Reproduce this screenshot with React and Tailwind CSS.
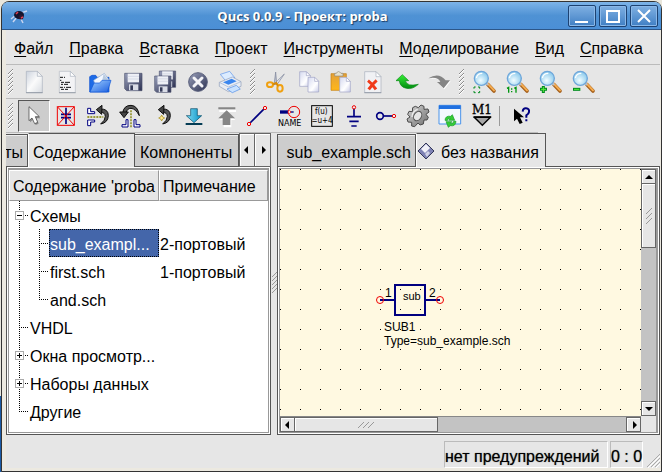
import React from "react";

const NAVY = "#000080";
const RED = "#f00000";

/* Every toolbar glyph is drawn on a 78-unit grid, three units to a pixel. */
function Glyph({ children }) {
  return (
    <svg className="h-[26px] w-[26px] shrink-0 overflow-visible" viewBox="0 0 78 78" aria-hidden="true">
      {children}
    </svg>
  );
}

function Defs() {
  return (
    <svg className="absolute h-0 w-0" aria-hidden="true">
      <defs>
        <linearGradient id="paper" x1="0" y1="0" x2="1" y2="1">
          <stop offset="0" stopColor="#ccd3de" />
          <stop offset=".5" stopColor="#fbfbfb" />
          <stop offset="1" stopColor="#d8dce2" />
        </linearGradient>
        <linearGradient id="sheet" x1="0" y1="0" x2="1" y2="1">
          <stop offset="0" stopColor="#d5d9f0" />
          <stop offset=".6" stopColor="#ffffff" />
          <stop offset="1" stopColor="#c9cce8" />
        </linearGradient>
        <linearGradient id="steel" x1="0" y1="0" x2="1" y2="1">
          <stop offset="0" stopColor="#9aa0bb" />
          <stop offset="1" stopColor="#2b3050" />
        </linearGradient>
        <linearGradient id="blue" x1="0" y1="0" x2="1" y2="1">
          <stop offset="0" stopColor="#9fd0ff" />
          <stop offset="1" stopColor="#1d5fe0" />
        </linearGradient>
        <linearGradient id="gold" x1="0" y1="0" x2="0" y2="1">
          <stop offset="0" stopColor="#e2a13b" />
          <stop offset="1" stopColor="#ffb719" />
        </linearGradient>
        <linearGradient id="cyan" x1="0" y1="0" x2="1" y2="0">
          <stop offset="0" stopColor="#7fdcf4" />
          <stop offset="1" stopColor="#0891c4" />
        </linearGradient>
        <linearGradient id="green" x1="0" y1="0" x2="0" y2="1">
          <stop offset="0" stopColor="#35f035" />
          <stop offset="1" stopColor="#008a10" />
        </linearGradient>
        <linearGradient id="silver" x1="0" y1="0" x2="1" y2="1">
          <stop offset="0" stopColor="#d8d8d8" />
          <stop offset="1" stopColor="#6c6c6c" />
        </linearGradient>
        <radialGradient id="lens" cx=".45" cy=".65" r=".7">
          <stop offset="0" stopColor="#f1fcff" />
          <stop offset="1" stopColor="#7fc4ea" />
        </radialGradient>
      </defs>
    </svg>
  );
}

const NewFile = () => (
  <Glyph>
    <path d="M16 7H49L64 22V71H16Z" fill="url(#paper)" stroke="#a9b1bd" strokeWidth="2" />
    <path d="M49 7V22H64Z" fill="#f4f5f7" stroke="#a9b1bd" strokeWidth="2" />
    <path d="M15 71H65" stroke="#7f8794" strokeWidth="2" />
  </Glyph>
);
const NewText = () => (
  <Glyph>
    <path d="M16 7H49L64 22V71H16Z" fill="#f3f3f5" stroke="#b4b9c2" strokeWidth="2" />
    <path d="M49 7V22H64Z" fill="#fff" stroke="#a9b1bd" strokeWidth="2" />
    <path d="M15 71H65" stroke="#7f8794" strokeWidth="2" />
    <path d="M18 25h9M30 25h3M18 34h4M21 40h9M33 40h15M21 46h6M30 46h12M18 55h9M30 55h3M36 55h15M21 61h9M33 61h9" stroke="#111" strokeWidth="3" />
  </Glyph>
);
const OpenFile = () => (
  <Glyph>
    <path d="M8 69V23L15 19H26L30 25H66V69Z" fill="#1d6be6" stroke="#0b4ed0" strokeWidth="2" />
    <path d="M20 34L52 13L66 33L60 58L28 60Z" fill="#f2f7ff" stroke="#8fa9cc" strokeWidth="2" />
    <path d="M50 14L64 34L46 33Z" fill="#b9cbe0" />
    <path d="M9 69L21 42H38L45 34H72L61 69Z" fill="url(#blue)" stroke="#0d56d8" strokeWidth="2" />
  </Glyph>
);
function Disk({ x, y, s = 1 }) {
  return (
    <g transform={`translate(${x} ${y}) scale(${s})`}>
      <path d="M0 0H52V52H6L0 46Z" fill="url(#steel)" stroke="#4a506d" strokeWidth="2" />
      <path d="M9 1H43V27H9Z" fill="#eef0f6" />
      <path d="M9 9H43M9 17H43" stroke="#c9cede" strokeWidth="2" />
      <path d="M13 33H41V51H13Z" fill="#d9dce6" />
      <path d="M17 36H25V50H17Z" fill="#343a58" />
    </g>
  );
}
const Save = () => (
  <Glyph>
    <Disk x={14} y={13} />
  </Glyph>
);
const SaveAll = () => (
  <Glyph>
    <Disk x={19} y={6} s={0.94} />
    <Disk x={5} y={21} s={0.94} />
  </Glyph>
);
const Close = () => (
  <Glyph>
    <circle cx="36" cy="39" r="28" fill="url(#steel)" stroke="#5a607c" strokeWidth="3" />
    <path d="M24 27L48 51M48 27L24 51" stroke="#f4f4f8" strokeWidth="9" strokeLinecap="round" />
  </Glyph>
);
const Print = () => (
  <Glyph>
    <path d="M4 16L32 7L48 27L22 38Z" fill="#dcecff" stroke="#5a93e8" strokeWidth="2" />
    <path d="M1 40L40 24L66 38V52L28 68L1 52Z" fill="#e9edf4" stroke="#8c9cb8" strokeWidth="2" />
    <path d="M1 40L28 54L66 38" fill="none" stroke="#9fb0cc" strokeWidth="2" />
    <path d="M12 40L38 29L53 37L28 47Z" fill="#3a86ee" />
    <path d="M24 60L52 49L64 60L40 71Z" fill="#c9e2ff" stroke="#4b8ae6" strokeWidth="2" />
  </Glyph>
);
const Cut = () => (
  <Glyph>
    <path d="M38 9L41 42L33 48Z" fill="#b9bfce" stroke="#7c8499" strokeWidth="2" />
    <path d="M64 15L42 47L34 44Z" fill="#dfe2ea" stroke="#7c8499" strokeWidth="2" />
    <ellipse cx="21" cy="47" rx="9" ry="7" fill="none" stroke="#f0a010" strokeWidth="6" />
    <ellipse cx="51" cy="58" rx="8" ry="10" fill="none" stroke="#f0a010" strokeWidth="6" />
    <path d="M29 46L40 42L45 51" fill="none" stroke="#d88a08" strokeWidth="6" />
  </Glyph>
);
const Page = ({ x, y }) => (
  <g transform={`translate(${x} ${y})`}>
    <path d="M0 0H20L32 12V44H0Z" fill="url(#sheet)" stroke="#9ea2c4" strokeWidth="2" />
    <path d="M20 0V12H32Z" fill="#fff" stroke="#9ea2c4" strokeWidth="2" />
  </g>
);
const Copy = () => (
  <Glyph>
    <Page x={11} y={8} />
    <Page x={36} y={25} />
  </Glyph>
);
const Paste = () => (
  <Glyph>
    <path d="M6 14H52V64H6Z" fill="url(#gold)" stroke="#c48012" strokeWidth="2" />
    <path d="M17 21V13H22Q28 2 36 13H42V21Z" fill="#e6e2d0" stroke="#8f8a78" strokeWidth="2" />
    <Page x={32} y={25} />
  </Glyph>
);
const Delete = () => (
  <Glyph>
    <path d="M8 8H42L57 23V71H8Z" fill="#f0f1f4" stroke="#a9b1bd" strokeWidth="2" />
    <path d="M42 8V23H57Z" fill="#fff" stroke="#a9b1bd" strokeWidth="2" />
    <path d="M7 71H58" stroke="#7f8794" strokeWidth="2" />
    <path d="M18 35Q30 44 42 61M44 34Q32 44 20 61" fill="none" stroke="#f03a1a" strokeWidth="9" />
  </Glyph>
);
const Undo = () => (
  <Glyph>
    <path d="M3 35L22 17L41 35H31Q36 54 70 46Q52 62 34 58Q15 54 13 35Z" fill="url(#green)" stroke="#078a14" strokeWidth="2" />
  </Glyph>
);
const Redo = () => (
  <Glyph>
    <path d="M6 30Q36 12 55 37H68L49 61L29 42H39Q31 25 6 30Z" fill="#fff" />
    <path d="M1 28Q32 8 53 34H66L47 58L27 39H37Q29 22 1 28Z" fill="#858585" />
  </Glyph>
);
const Magnifier = ({ children }) => (
  <Glyph>
    <path d="M47 46L66 66" stroke="#a5601c" strokeWidth="11" strokeLinecap="round" />
    <path d="M48 45L66 64" stroke="#f5ac50" strokeWidth="6" strokeLinecap="round" />
    <path d="M42 42L48 48" stroke="#b8c0cc" strokeWidth="7" />
    <circle cx="28" cy="28" r="21" fill="url(#lens)" stroke="#6ea6da" strokeWidth="4" />
    <path d="M13 27Q16 13 31 13" fill="none" stroke="#fff" strokeWidth="4" />
    {children}
  </Glyph>
);
const ZoomFit = () => (
  <Magnifier>
    <path d="M6 59V54H11M18 54H23V59M23 66V71H18M11 71H6V66" fill="none" stroke="#008c1e" strokeWidth="3" />
  </Magnifier>
);
const ZoomOne = () => (
  <Magnifier>
    <path d="M6 58L11 55V71M28 58L33 55V71M20 58V62M20 66V70" fill="none" stroke="#009610" strokeWidth="4" />
  </Magnifier>
);
const ZoomIn = () => (
  <Magnifier>
    <path d="M16 51V72M6 61H27" stroke="#008c1e" strokeWidth="9" />
    <path d="M16 54V69M9 61H24" stroke="#5bee3e" strokeWidth="3" />
  </Magnifier>
);
const ZoomOut = () => (
  <Magnifier>
    <path d="M6 61H28" stroke="#008c1e" strokeWidth="9" />
    <path d="M9 61H25" stroke="#5bee3e" strokeWidth="3" />
  </Magnifier>
);

const Pointer = () => (
  <Glyph>
    <path d="M27 16V58L36 50L44 66L53 62L46 46H58Z" fill="#8c8c8c" />
    <path d="M24 11V53L33 45L41 62L50 58L43 41H55Z" fill="#fff" stroke="#333" strokeWidth="2" />
  </Glyph>
);
const Deactivate = () => (
  <Glyph>
    <path d="M39 14V63M24 34H54M24 44H54" stroke={NAVY} strokeWidth="5" />
    <path d="M13 11H64V67H13ZM13 11L64 67M64 11L13 67" fill="none" stroke={RED} strokeWidth="3" />
  </Glyph>
);
const BackArrow = ({ x, y }) => (
  <g transform={`translate(${x} ${y})`}>
    <path d="M12 11Q36 10 36 31Q35 52 13 56Q27 45 27 33Q26 21 12 20Z" fill="#555" stroke="#0c0c0c" strokeWidth="3" />
    <path d="M0 13L17 0L16 27Z" fill="#444" stroke="#0c0c0c" strokeWidth="3" />
  </g>
);
const MirrorX = () => (
  <Glyph>
    <BackArrow x={34} y={7} />
    <path d="M8 16V32H29V26H17V16ZM8 68V51H29V57H17V68Z" fill="#fff" stroke={NAVY} strokeWidth="3" />
    <path d="M7 42H55" stroke="#808000" strokeWidth="4" strokeDasharray="6 3" />
  </Glyph>
);
const MirrorY = () => (
  <Glyph>
    <path d="M17 30Q20 7 42 7Q63 8 67 38Q56 17 42 16Q30 16 27 30Z" fill="#555" stroke="#0c0c0c" strokeWidth="3" />
    <path d="M8 27L34 27L21 44Z" fill="#444" stroke="#0c0c0c" strokeWidth="3" />
    <path d="M15 72H33V50H27V65H15ZM69 72H51V50H57V65H69Z" fill="#fff" stroke={NAVY} strokeWidth="3" />
    <path d="M42 22V76" stroke="#808000" strokeWidth="4" strokeDasharray="6 3" />
  </Glyph>
);
const Rotate = () => (
  <Glyph>
    <BackArrow x={28} y={7} />
    <path d="M38 36L41 42L47 45L41 48L38 54L35 48L29 45L35 42Z" fill="#ffe890" stroke="#a08a10" strokeWidth="2" />
  </Glyph>
);
const GoInto = () => (
  <Glyph>
    <path d="M29 17H49V38H62L39 59L16 38H29Z" fill="url(#cyan)" stroke="#064a66" strokeWidth="2" />
    <path d="M14 63H64" stroke="#053d55" strokeWidth="6" />
  </Glyph>
);
const PopOut = () => (
  <Glyph>
    <path d="M19 21H69V27H19ZM32 73V51H19L43 29L67 51H55V73Z" fill="#fff" />
    <path d="M16 13H67V19H16ZM29 66V46H16L41 22L66 46H52V66Z" fill="#868686" />
  </Glyph>
);
const Wire = () => (
  <Glyph>
    <path d="M15 60L58 17" stroke={NAVY} strokeWidth="5" />
    <circle cx="12" cy="63" r="5" fill="#eee" stroke={RED} strokeWidth="3" />
    <circle cx="60" cy="15" r="5" fill="#eee" stroke={RED} strokeWidth="3" />
  </Glyph>
);
const Label = () => (
  <Glyph>
    <path d="M9 27H50" stroke={NAVY} strokeWidth="4" />
    <path d="M9 22H33V32H9Z" fill={NAVY} />
    <circle cx="51" cy="27" r="17" fill="none" stroke={RED} strokeWidth="3" />
    <circle cx="37" cy="27" r="4" fill="#fff" stroke={RED} strokeWidth="2" />
    <text x="38" y="69" textAnchor="middle" className="font-['DejaVu_Sans',sans-serif]" fontSize="24" fill="#000">NAME</text>
  </Glyph>
);
const Equation = () => (
  <Glyph>
    <rect x="8" y="8" width="62" height="62" fill="none" stroke="#000" strokeWidth="3" />
    <text x="37" y="34" textAnchor="middle" className="font-['DejaVu_Sans_Condensed','DejaVu_Sans',sans-serif]" fontSize="24" fill="#000">f(u)</text>
    <text x="39" y="61" textAnchor="middle" className="font-['DejaVu_Sans_Condensed','DejaVu_Sans',sans-serif]" fontSize="24" fill="#000">=u+4</text>
  </Glyph>
);
const Ground = () => (
  <Glyph>
    <path d="M39 16V40M18 41H60M25 55H53M31 69H47" stroke={NAVY} strokeWidth="5" />
    <circle cx="39" cy="13" r="5" fill="#eee" stroke={RED} strokeWidth="3" />
  </Glyph>
);
const Port = () => (
  <Glyph>
    <circle cx="21" cy="39" r="10" fill="none" stroke={NAVY} strokeWidth="5" />
    <path d="M31 39H58" stroke={NAVY} strokeWidth="5" />
    <circle cx="63" cy="39" r="5" fill="#eee" stroke={RED} strokeWidth="3" />
  </Glyph>
);
const Gear = () => (
  <Glyph>
    <path
      d="M31 10L40 14L48 6L57 10L57 19L69 18L72 27L63 34L70 43L66 51L57 51L55 63L45 66L39 60L29 71L20 69L20 58L9 57L6 48L15 42L8 34L12 25L22 26L23 14Z"
      fill="url(#silver)"
      stroke="#4a4a4a"
      strokeWidth="3"
      strokeLinejoin="round"
    />
    <ellipse cx="38" cy="39" rx="11" ry="15" transform="rotate(32 38 39)" fill="#e6e6e6" stroke="#555" strokeWidth="3" />
    <path d="M21 42Q22 24 38 19" fill="none" stroke="#f0f0f0" strokeWidth="4" />
  </Glyph>
);
const ViewData = () => (
  <Glyph>
    <path d="M6 7H71V63H6Z" fill="#f4f9ff" stroke="#4a94ea" strokeWidth="3" />
    <path d="M6 7H71V18H6Z" fill="#2070e0" />
    <path d="M24 52Q25 37 41 40L46 35L53 52L35 52L40 47Q33 44 31 53Z" fill="#35cc35" stroke="#159c28" strokeWidth="2" />
    <path d="M57 55Q56 71 40 68L34 73L27 56L45 56L40 61Q48 64 50 55Z" fill="#35cc35" stroke="#159c28" strokeWidth="2" />
  </Glyph>
);
const Marker = () => (
  <Glyph>
    <text x="39" y="32" textAnchor="middle" className="font-['DejaVu_Serif',serif]" fontSize="36" fill="#000" stroke="#000">M1</text>
    <path d="M16 43H64L40 67Z" fill="#a6a6a6" stroke="#000" strokeWidth="4" />
    <path d="M14 42H66" stroke="#000" strokeWidth="5" />
  </Glyph>
);
const WhatsThis = () => (
  <Glyph>
    <path d="M15 17V55L24 47L32 63L41 59L33 43H45Z" fill="#000" />
    <path d="M41 26Q42 15 51 16Q62 17 60 27Q59 33 52 37V44M52 49V55" fill="none" stroke={NAVY} strokeWidth="6" />
  </Glyph>
);

function ToolButton({ icon: Icon, label, active }) {
  return (
    <button
      type="button"
      aria-label={label}
      className={
        active
          ? "flex h-8 w-8 items-center justify-center border border-b-white border-l-[#555] border-r-white border-t-[#555] bg-[#cdcdcd]"
          : "flex h-8 w-8 items-center justify-center"
      }
    >
      <Icon />
    </button>
  );
}

function Grip() {
  return (
    <span className="flex w-3 items-center pl-0.5">
      <svg className="h-[26px] w-[5px]" viewBox="0 0 5 26" aria-hidden="true">
        {[0, 4, 8, 12, 16, 20].map((y) => (
          <g key={y}>
            <path d={`M0 ${y + 6}L5 ${y + 1}`} stroke="#fff" />
            <path d={`M0 ${y + 5}L5 ${y}`} stroke="#8c8c8c" />
          </g>
        ))}
      </svg>
    </span>
  );
}

const fileTools = [
  [
    [NewFile, "Новый"],
    [NewText, "Новый текст"],
    [OpenFile, "Открыть"],
    [Save, "Сохранить"],
    [SaveAll, "Сохранить все"],
    [Close, "Закрыть"],
    [Print, "Печать"],
  ],
  [
    [Cut, "Вырезать"],
    [Copy, "Копировать"],
    [Paste, "Вставить"],
    [Delete, "Удалить"],
    [Undo, "Отменить"],
    [Redo, "Вернуть"],
  ],
  [
    [ZoomFit, "Показать все"],
    [ZoomOne, "Масштаб 1:1"],
    [ZoomIn, "Увеличить"],
    [ZoomOut, "Уменьшить"],
  ],
];

const workTools = [
  [Pointer, "Выделить"],
  [Deactivate, "Деактивировать"],
  [MirrorX, "Отразить по X"],
  [MirrorY, "Отразить по Y"],
  [Rotate, "Повернуть"],
  [GoInto, "Войти в подсхему"],
  [PopOut, "Выйти из подсхемы"],
  [Wire, "Проводник"],
  [Label, "Метка проводника"],
  [Equation, "Уравнение"],
  [Ground, "Земля"],
  [Port, "Вывод"],
  [Gear, "Моделировать"],
  [ViewData, "Просмотр данных"],
  [Marker, "Маркер"],
];

const menus = ["Файл", "Правка", "Вставка", "Проект", "Инструменты", "Моделирование", "Вид", "Справка"];

function TitleButton({ label, d }) {
  return (
    <button
      type="button"
      aria-label={label}
      className="flex h-[22px] w-7 items-center justify-center rounded-[2px] border border-[#1d4272] bg-linear-to-b from-[#7fb0e2] to-[#3f7fc4] shadow-[inset_0_0_0_1px_#8ab8e8]"
    >
      <svg className="h-4 w-4" viewBox="0 0 16 16" aria-hidden="true">
        <path d={d} fill="none" stroke="#fff" strokeWidth="2" />
      </svg>
    </button>
  );
}

function TitleBar() {
  return (
    <header className="flex h-7 shrink-0 items-center gap-[3px] rounded-t-md border-b border-[#2c5688] bg-linear-to-b from-[#7db4e8] via-[#4f92d4] to-[#4b8fd6] px-[3px]">
      <svg className="ml-1 h-5 w-5 shrink-0" viewBox="0 0 20 20" aria-hidden="true">
        <path d="M2 13L7 9M4 16L8 11M12 7L18 5M12 13L14 17" stroke="#c8d4f0" strokeWidth="1.5" />
        <ellipse cx="10" cy="9" rx="5" ry="4" fill="#14142e" />
        <circle cx="12" cy="11" r="2.5" fill="#2a1730" />
        <path d="M7 8l2-2M12 12l2-1" stroke="#e04050" strokeWidth="1.5" />
      </svg>
      <h1 className="flex-1 pl-2 text-center font-['Open_Sans','Noto_Sans',sans-serif] text-[13px] font-bold text-white [text-shadow:1px_1px_1px_#1b3a60]">
        Qucs 0.0.9 - Проект: proba
      </h1>
      <TitleButton label="Свернуть" d="M1 14H14" />
      <TitleButton label="Развернуть" d="M2 3H14V14H2Z" />
      <TitleButton label="Закрыть окно" d="M2 2L14 14M14 2L2 14" />
    </header>
  );
}

/* Dotted guides of the tree: "tee" passes on downwards, "end" stops, "line" has no arm. */
function Branch({ kind, box }) {
  const dots = { stroke: "#000", strokeDasharray: "1 1" };
  return (
    <svg className="h-7 w-5 shrink-0" viewBox="0 0 20 28" aria-hidden="true">
      <path d={kind === "end" ? "M10.5 0V15" : "M10.5 0V28"} {...dots} />
      {kind !== "line" && <path d="M12 14.5H19" {...dots} />}
      {box && (
        <g>
          <rect x="6.5" y="10.5" width="8" height="8" fill="#fff" stroke="#aaa" />
          <path d={box === "plus" ? "M8 14.5H13M10.5 12V17" : "M8 14.5H13"} stroke="#000" />
        </g>
      )}
    </svg>
  );
}

const tree = [
  { name: "Схемы", guides: ["tee"], box: "minus" },
  { name: "sub_exampl...", note: "2-портовый", guides: ["line", "tee"], selected: true },
  { name: "first.sch", note: "1-портовый", guides: ["line", "tee"] },
  { name: "and.sch", guides: ["line", "end"] },
  { name: "VHDL", guides: ["tee"] },
  { name: "Окна просмотр...", guides: ["tee"], box: "plus" },
  { name: "Наборы данных", guides: ["tee"], box: "plus" },
  { name: "Другие", guides: ["end"] },
];

function TreeTable() {
  const head = "h-[31px] border border-b-[#999] border-l-white border-r-[#999] border-t-white bg-[#e6e6e6] px-[3px] pt-0.5 text-left font-normal";
  return (
    <table className="w-full table-fixed border-separate border-spacing-0 whitespace-nowrap">
      <thead>
        <tr>
          <th className={`${head} w-[150px]`}>Содержание 'proba</th>
          <th className={head}>Примечание</th>
        </tr>
      </thead>
      <tbody>
        {tree.map((row) => (
          <tr key={row.name}>
            <td className="p-0">
              <div className="flex h-7">
                {row.guides.map((g, i) => (
                  <Branch key={i} kind={g} box={row.box} />
                ))}
                <span
                  className={
                    row.selected
                      ? "flex flex-1 items-center border border-dotted border-black bg-[#4466aa] pt-1 text-white"
                      : "flex flex-1 items-center pl-px pt-1"
                  }
                >
                  {row.name}
                </span>
              </div>
            </td>
            <td className="px-px pb-0 pt-1">{row.note}</td>
          </tr>
        ))}
      </tbody>
    </table>
  );
}

function Arrow({ d }) {
  return (
    <svg className="h-2 w-2 shrink-0" viewBox="0 0 8 8" aria-hidden="true">
      <path d={d} fill="#000" />
    </svg>
  );
}
const LEFT = "M5 0V8L1 4Z";
const RIGHT = "M3 0V8L7 4Z";
const UP = "M0 6H8L4 2Z";
const DOWN = "M0 2H8L4 6Z";

const raised = "flex items-center justify-center border border-[#666] bg-[#e6e6e6] shadow-[inset_1px_1px_0_#fff]";
const idleTab = "mt-px flex h-[33px] items-center overflow-hidden border border-[#555] bg-[#cdcdcd] pt-1 shadow-[inset_0_1px_0_#eee]";
const activeTab = "flex h-[34px] items-center overflow-hidden border-l border-r border-t border-l-white border-r-[#555] border-t-[#555] bg-[#e6e6e6] pt-1";

function Sidebar() {
  return (
    <aside className="flex w-[265px] shrink-0 flex-col">
      <div role="tablist" className="flex h-[34px] whitespace-nowrap">
        <button type="button" role="tab" className={`${idleTab} w-[22px] justify-end border-l-0 pr-1`}>
          ты
        </button>
        <button type="button" role="tab" aria-selected="true" className={`${activeTab} w-[107px] pl-1`}>
          Содержание
        </button>
        <button type="button" role="tab" className={`${idleTab} flex-1 border-l-0 pl-[5px]`}>
          Компоненты
        </button>
        <button type="button" aria-label="Вкладки влево" className={`${raised} w-4`}>
          <Arrow d={LEFT} />
        </button>
        <button type="button" aria-label="Вкладки вправо" className={`${raised} w-4 border-l-0`}>
          <Arrow d={RIGHT} />
        </button>
      </div>
      <div className="flex flex-1 flex-col border border-t-0 border-[#555] bg-white p-px">
        <div className="flex-1 border border-t-2 border-[#999]">
          <TreeTable />
        </div>
      </div>
    </aside>
  );
}

function Schematic() {
  return (
    <svg className="min-h-0 w-full flex-1 bg-[#fff9e1] font-['Liberation_Sans',Arial,sans-serif] text-[12px]" role="img" aria-label="Схема">
      <defs>
        <pattern id="grid" width="20" height="20" patternUnits="userSpaceOnUse">
          <rect width="1" height="1" fill="#000" />
        </pattern>
      </defs>
      <rect width="100%" height="100%" fill="url(#grid)" />
      <g fill="none" stroke={NAVY} strokeWidth="2">
        <rect x="115" y="116" width="30" height="30" />
        <path d="M100 131H115M145 131H160" />
      </g>
      <g fill="none" stroke={RED}>
        <circle cx="100" cy="131" r="3.5" />
        <circle cx="160" cy="131" r="3.5" />
      </g>
      <g fill="#000">
        <text x="105" y="128">1</text>
        <text x="149" y="128">2</text>
        <text x="123" y="131" fontSize="11">sub</text>
        <text x="104" y="162">SUB1</text>
        <text x="104" y="176">Type=sub_example.sch</text>
      </g>
    </svg>
  );
}

function Hatch({ vertical }) {
  return (
    <svg className={vertical ? "h-4 w-1.5" : "h-1.5 w-4"} viewBox={vertical ? "0 0 6 16" : "0 0 16 6"} aria-hidden="true">
      <path d={vertical ? "M0 6L6 0M0 11L6 5M0 16L6 10" : "M0 6L6 0M5 6L11 0M10 6L16 0"} stroke="#999" />
    </svg>
  );
}

function Editor() {
  return (
    <main className="flex min-w-0 flex-1 flex-col">
      <div role="tablist" className="flex h-[34px] whitespace-nowrap">
        <button type="button" role="tab" className={`${idleTab} w-[139px] justify-end pr-1`}>
          sub_example.sch
        </button>
        <button type="button" role="tab" aria-selected="true" className={`${activeTab} w-[130px]`}>
          <svg className="-mt-1 mr-1.5 h-[18px] w-[18px] shrink-0" viewBox="0 0 18 18" aria-hidden="true">
            <path d="M9 1L17 9L9 17L1 9Z" fill="#7e82b4" stroke="#333858" />
            <path d="M9 2L13 6L8 11L4 7Z" fill="#f1f1f8" />
            <path d="M8 12L11 9L13 11L10 15Z" fill="#cfd1e6" />
          </svg>
          без названия
        </button>
        <span className="flex-1 border-b border-[#555]" />
      </div>
      <div className="flex min-h-0 flex-1 flex-col border border-t-0 border-[#555] bg-white p-px">
        <div className="flex min-h-0 flex-1 border border-[#999]">
          <div className="flex min-w-0 flex-1 flex-col">
            <Schematic />
            <div className="flex h-4 shrink-0 border-t border-[#888] bg-[#c3c3c3]">
              <button type="button" aria-label="Влево" className={`${raised} w-[15px]`}>
                <Arrow d={LEFT} />
              </button>
              <div className={`${raised} w-[143px] border-l-0`}>
                <Hatch />
              </div>
              <span className="flex-1" />
              <button type="button" aria-label="Вправо" className={`${raised} w-[15px]`}>
                <Arrow d={RIGHT} />
              </button>
            </div>
          </div>
          <div className="flex w-4 shrink-0 flex-col border-r border-r-[#999] bg-[#c3c3c3]">
            <button type="button" aria-label="Вверх" className={`${raised} h-[15px]`}>
              <Arrow d={UP} />
            </button>
            <div className={`${raised} h-16 border-t-0`}>
              <Hatch vertical />
            </div>
            <span className="flex-1" />
            <button type="button" aria-label="Вниз" className={`${raised} h-[15px]`}>
              <Arrow d={DOWN} />
            </button>
            <span className="h-4 bg-[#e6e6e6]" />
          </div>
        </div>
      </div>
    </main>
  );
}

function StatusBar() {
  const cell = "flex h-[27px] items-center border border-b-white border-l-[#bbb] border-r-white border-t-[#bbb] pt-1 [text-shadow:0_0_1px_#555]";
  return (
    <footer className="flex h-[33px] shrink-0 items-end justify-end gap-0.5 whitespace-nowrap">
      <span className={`${cell} w-[164px]`}>нет предупреждений</span>
      <span className={`${cell} w-[33px]`}>0 : 0</span>
      <svg className="ml-0.5 h-[14px] w-[13px]" viewBox="0 0 13 14" aria-hidden="true">
        <path d="M0 13L13 0M4 13L13 4M8 13L13 8" stroke="#aaa" />
        <path d="M1 14L13 2M5 14L13 6M9 14L13 10" stroke="#fff" />
      </svg>
    </footer>
  );
}

export default function App() {
  return (
    <div className="flex h-screen bg-linear-to-b from-[#e8e6dc] from-84% to-[#1b5aa5] to-84% pl-px pt-px font-['Liberation_Sans',Arial,sans-serif] text-[16px] leading-5 text-black">
      <Defs />
      <div className="flex min-w-0 flex-1 flex-col rounded-t-lg border border-[#333] bg-[#ece9e0]">
        <TitleBar />
        <div className="mb-[3px] ml-1 mr-px flex min-h-0 flex-1 flex-col bg-[#e6e6e6]">
          <nav className="flex h-[35px] shrink-0 items-center gap-4 border-b border-[#bbb] px-2 pt-1">
            {menus.map((m) => (
              <button key={m} type="button">
                <span className="underline underline-offset-2">{m[0]}</span>
                {m.slice(1)}
              </button>
            ))}
          </nav>
          <div role="toolbar" aria-label="Файл" className="flex h-[34px] w-fit shrink-0 items-center border-b border-[#bbb]">
            {fileTools.map((group, i) => (
              <div key={i} className="flex">
                <Grip />
                <div className="flex gap-px">
                  {group.map(([icon, label]) => (
                    <ToolButton key={label} icon={icon} label={label} />
                  ))}
                </div>
              </div>
            ))}
          </div>
          <div role="toolbar" aria-label="Работа" className="flex h-[34px] w-fit shrink-0 items-center border-b border-[#bbb]">
            <Grip />
            {workTools.map(([icon, label], i) => (
              <ToolButton key={label} icon={icon} label={label} active={i === 0} />
            ))}
            <span className="mr-1.5 h-5 w-0.5 border-r border-[#999]" />
            <ToolButton icon={WhatsThis} label="Что это?" />
          </div>
          <div className="flex min-h-0 flex-1">
            <Sidebar />
            <div className="flex w-1.5 shrink-0 items-center justify-center">
              <svg className="h-6 w-[5px]" viewBox="0 0 5 24" aria-hidden="true">
                <path d="M0 5L5 0M0 9L5 4M0 13L5 8M0 17L5 12M0 21L5 16" stroke="#999" />
              </svg>
            </div>
            <Editor />
          </div>
          <StatusBar />
        </div>
      </div>
    </div>
  );
}
